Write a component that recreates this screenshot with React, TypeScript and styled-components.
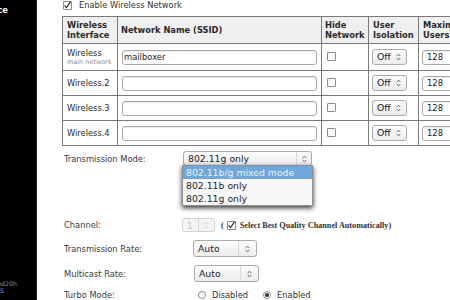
import React from 'react';
import styled, { createGlobalStyle } from 'styled-components';

const GlobalStyle = createGlobalStyle`
  html, body {
    margin: 0;
    padding: 0;
    background: #fff;
    overflow: hidden;
  }
  body {
    font-family: "DejaVu Sans", "Liberation Sans", sans-serif;
    color: #333;
  }
`;

const Page = styled.div`
  display: flex;
  width: 450px;
  height: 300px;
  overflow: hidden;
`;

const Sidebar = styled.aside`
  width: 36px;
  flex-shrink: 0;
  background: #000;
  border-right: 1px solid #2a2a2a;
  display: flex;
  flex-direction: column;
  justify-content: space-between;
  overflow: hidden;
`;

const SideItem = styled.div`
  display: flex;
  justify-content: flex-end;
  white-space: nowrap;
  padding: 5px 28px 0 0;
  color: #fff;
  font-weight: bold;
  font-size: 8.3px;
  line-height: 10px;
`;

const SideStatus = styled.div`
  display: flex;
  flex-direction: column;
  padding-bottom: 6px;
`;

const StatusLine = styled.div<{ $pad: number }>`
  display: flex;
  justify-content: flex-end;
  white-space: nowrap;
  padding-right: ${(p) => p.$pad}px;
  color: #6d98c8;
  font-size: 6.3px;
  line-height: 6.5px;
`;

const Main = styled.main`
  flex: 1;
  min-width: 0;
  padding-left: 26px;
`;

const EnableRow = styled.label`
  display: flex;
  align-items: center;
  gap: 7px;
  height: 10px;
  font-size: 8.3px;
  color: #333;
`;

const Box = styled.span`
  box-sizing: border-box;
  width: 9px;
  height: 9px;
  flex-shrink: 0;
  border: 1px solid #8c8c8c;
  border-radius: 1px;
  background: #fff;
  display: inline-flex;
  align-items: center;
  justify-content: center;
  overflow: visible;
`;

const Table = styled.table`
  margin: 6px 0 0 -1px;
  border-collapse: collapse;
  table-layout: fixed;
  width: 416px;
  font-size: 8.3px;
  color: #2a2a2a;
`;

const HeadCell = styled.th<{ $padLeft?: number }>`
  background: #efefef;
  border: 1px solid #7a7a7a;
  padding: 3px 3px 3px ${(p) => p.$padLeft ?? 3}px;
  text-align: left;
  font-weight: bold;
  line-height: 10px;
  vertical-align: middle;
  white-space: nowrap;
  overflow: hidden;
`;

const Cell = styled.td<{ $padLeft?: number }>`
  border: 1px solid #7a7a7a;
  padding: 4px 3px 4px ${(p) => p.$padLeft ?? 3}px;
  line-height: 10px;
  vertical-align: middle;
  white-space: nowrap;
  overflow: hidden;
`;

const SubNote = styled.div`
  font-size: 6.5px;
  line-height: 8px;
  color: #8e8e8e;
`;

const TextField = styled.input<{ $width: number; $pad: number }>`
  display: block;
  box-sizing: border-box;
  width: ${(p) => p.$width}px;
  height: 15px;
  margin: 0;
  border: 1px solid #a9a9a9;
  border-radius: 3px;
  box-shadow: inset 0 1px 1px rgba(0, 0, 0, 0.08);
  padding: 0 0 0 ${(p) => p.$pad}px;
  font: 8.4px "DejaVu Sans", sans-serif;
  color: #222;
  background: #fff;
  outline: none;
`;

const SelectBox = styled.div<{ $width: number; $height: number; $disabled?: boolean }>`
  position: relative;
  box-sizing: border-box;
  display: inline-flex;
  align-items: stretch;
  width: ${(p) => p.$width}px;
  height: ${(p) => p.$height}px;
  border: 1px solid ${(p) => (p.$disabled ? '#d3d3d3' : '#ababab')};
  border-radius: 3px;
  background: ${(p) => (p.$disabled ? '#f4f4f4' : 'linear-gradient(#fdfdfd, #ececec)')};
  color: ${(p) => (p.$disabled ? '#c2c2c2' : '#222')};
  font-size: 9.3px;
  vertical-align: middle;
`;

const SelectValue = styled.span`
  flex: 1;
  display: flex;
  align-items: center;
  padding-left: 4px;
  white-space: nowrap;
`;

const SelectArrow = styled.span<{ $width: number; $divider?: boolean; $disabled?: boolean }>`
  width: ${(p) => p.$width}px;
  display: flex;
  align-items: center;
  justify-content: center;
  border-left: ${(p) => (p.$divider ? '1px solid #d9d9d9' : 'none')};
  color: ${(p) => (p.$disabled ? '#c8c8c8' : '#4a4a4a')};
`;

const DropList = styled.ul`
  position: absolute;
  top: 13px;
  left: -2px;
  width: 131px;
  box-sizing: border-box;
  margin: 0;
  padding: 0;
  list-style: none;
  background: #f7f7f7;
  border: 1px solid #8e8e8e;
  box-shadow: 0 2px 5px rgba(0, 0, 0, 0.8);
  z-index: 5;
`;

const DropOption = styled.li<{ $active?: boolean }>`
  height: 13px;
  line-height: 13px;
  padding-left: 3px;
  font-size: 9.3px;
  white-space: nowrap;
  background: ${(p) => (p.$active ? '#6fa7da' : 'transparent')};
  color: ${(p) => (p.$active ? '#e9f3fc' : '#1e1e1e')};
`;

const SettingRow = styled.div<{ $label: number; $top: number; $height: number }>`
  display: grid;
  grid-template-columns: ${(p) => p.$label}px auto;
  justify-content: start;
  align-items: center;
  height: ${(p) => p.$height}px;
  margin-top: ${(p) => p.$top}px;
`;

const Label = styled.span`
  font-size: 8.3px;
  line-height: 10px;
  color: #3a3a3a;
  padding-left: 1px;
  white-space: nowrap;
`;

const Inline = styled.div`
  display: flex;
  align-items: center;
`;

const AutoNote = styled.span`
  display: inline-flex;
  align-items: center;
  gap: 3px;
  margin-left: 6px;
  font-family: "Liberation Serif", "Times New Roman", serif;
  font-size: 8.2px;
  font-weight: bold;
  color: #333;
  white-space: nowrap;
`;

const NoteText = styled.span`
  margin-left: 1px;
`;

const RadioGroup = styled.div`
  display: flex;
  align-items: center;
  padding-left: 5px;
  font-size: 8.3px;
  color: #333;
`;

const RadioOption = styled.label`
  display: inline-flex;
  align-items: center;
  gap: 6px;
  margin-right: 15px;
`;

const Radio = styled.span<{ $on?: boolean }>`
  box-sizing: border-box;
  width: 8px;
  height: 8px;
  border: 1px solid #8c8c8c;
  border-radius: 50%;
  background: #fff;
  display: inline-flex;
  align-items: center;
  justify-content: center;

  &::after {
    content: '';
    width: 4px;
    height: 4px;
    border-radius: 50%;
    background: ${(p) => (p.$on ? '#333' : 'transparent')};
  }
`;

const Checkbox = ({ checked }: { checked?: boolean }) => (
  <Box>
    {checked && (
      <svg width="9" height="9" viewBox="0 0 9 9" style={{ overflow: 'visible' }}>
        <path d="M1.6 4.4 L3.5 6.6 L7.6 0.6" fill="none" stroke="#2d2d2d" strokeWidth="1.2" />
      </svg>
    )}
  </Box>
);

const Chevrons = () => (
  <svg width="5" height="8" viewBox="0 0 5 8">
    <path
      d="M0.7 3 L2.5 1.2 L4.3 3 M0.7 5 L2.5 6.8 L4.3 5"
      fill="none"
      stroke="currentColor"
      strokeWidth="0.9"
    />
  </svg>
);

type SelectProps = {
  value: string;
  width: number;
  height: number;
  arrow?: number;
  divider?: boolean;
  disabled?: boolean;
  children?: React.ReactNode;
};

const FakeSelect = ({ value, width, height, arrow = 15, divider, disabled, children }: SelectProps) => (
  <SelectBox $width={width} $height={height} $disabled={disabled}>
    <SelectValue>{value}</SelectValue>
    <SelectArrow $width={arrow} $divider={divider} $disabled={disabled}>
      <Chevrons />
    </SelectArrow>
    {children}
  </SelectBox>
);

const interfaces = [
  { name: 'Wireless', note: 'main network', ssid: 'mailboxer' },
  { name: 'Wireless.2', ssid: '' },
  { name: 'Wireless.3', ssid: '' },
  { name: 'Wireless.4', ssid: '' },
];

const modes = ['802.11b/g mixed mode', '802.11b only', '802.11g only'];

const App = () => {
  return (
    <Page>
      <GlobalStyle />
      <Sidebar>
        <SideItem>Wireless Interface</SideItem>
        <SideStatus>
          <StatusLine $pad={19}>Uptime: 0d20h</StatusLine>
          <StatusLine $pad={32}>Load: 0.05</StatusLine>
        </SideStatus>
      </Sidebar>

      <Main>
        <EnableRow>
          <Checkbox checked />
          Enable Wireless Network
        </EnableRow>

        <Table>
          <colgroup>
            <col style={{ width: 55 }} />
            <col style={{ width: 204 }} />
            <col style={{ width: 47 }} />
            <col style={{ width: 50 }} />
            <col style={{ width: 60 }} />
          </colgroup>
          <thead>
            <tr>
              <HeadCell $padLeft={4}>
                Wireless
                <br />
                Interface
              </HeadCell>
              <HeadCell>Network Name (SSID)</HeadCell>
              <HeadCell>
                Hide
                <br />
                Network
              </HeadCell>
              <HeadCell $padLeft={4}>
                User
                <br />
                Isolation
              </HeadCell>
              <HeadCell $padLeft={4}>
                Maximum
                <br />
                Users
              </HeadCell>
            </tr>
          </thead>
          <tbody>
            {interfaces.map((w) => (
              <tr key={w.name}>
                <Cell $padLeft={4}>
                  {w.name}
                  {w.note && <SubNote>{w.note}</SubNote>}
                </Cell>
                <Cell $padLeft={4}>
                  <TextField $width={195} $pad={1} defaultValue={w.ssid} />
                </Cell>
                <Cell $padLeft={5}>
                  <Checkbox />
                </Cell>
                <Cell $padLeft={3}>
                  <FakeSelect value="Off" width={35} height={16} />
                </Cell>
                <Cell $padLeft={3}>
                  <TextField $width={48} $pad={4} defaultValue="128" />
                </Cell>
              </tr>
            ))}
          </tbody>
        </Table>

        <SettingRow $label={120} $top={5} $height={15}>
          <Label>Transmission Mode:</Label>
          <FakeSelect value="802.11g only" width={129} height={15} arrow={14} divider>
            <DropList>
              {modes.map((m, i) => (
                <DropOption key={m} $active={i === 0}>
                  {m}
                </DropOption>
              ))}
            </DropList>
          </FakeSelect>
        </SettingRow>

        <SettingRow $label={119} $top={52} $height={14}>
          <Label>Channel:</Label>
          <Inline>
            <FakeSelect value="1" width={33} height={14} divider disabled />
            <AutoNote>
              (
              <Checkbox checked />
              <NoteText>Select Best Quality Channel Automatically)</NoteText>
            </AutoNote>
          </Inline>
        </SettingRow>

        <SettingRow $label={130} $top={8} $height={17}>
          <Label>Transmission Rate:</Label>
          <FakeSelect value="Auto" width={64} height={17} arrow={17} divider />
        </SettingRow>

        <SettingRow $label={131} $top={8} $height={17}>
          <Label>Multicast Rate:</Label>
          <FakeSelect value="Auto" width={65} height={17} arrow={17} divider />
        </SettingRow>

        <SettingRow $label={130} $top={7} $height={12}>
          <Label>Turbo Mode:</Label>
          <RadioGroup>
            <RadioOption>
              <Radio />
              Disabled
            </RadioOption>
            <RadioOption>
              <Radio $on />
              Enabled
            </RadioOption>
          </RadioGroup>
        </SettingRow>
      </Main>
    </Page>
  );
};

export default App;
